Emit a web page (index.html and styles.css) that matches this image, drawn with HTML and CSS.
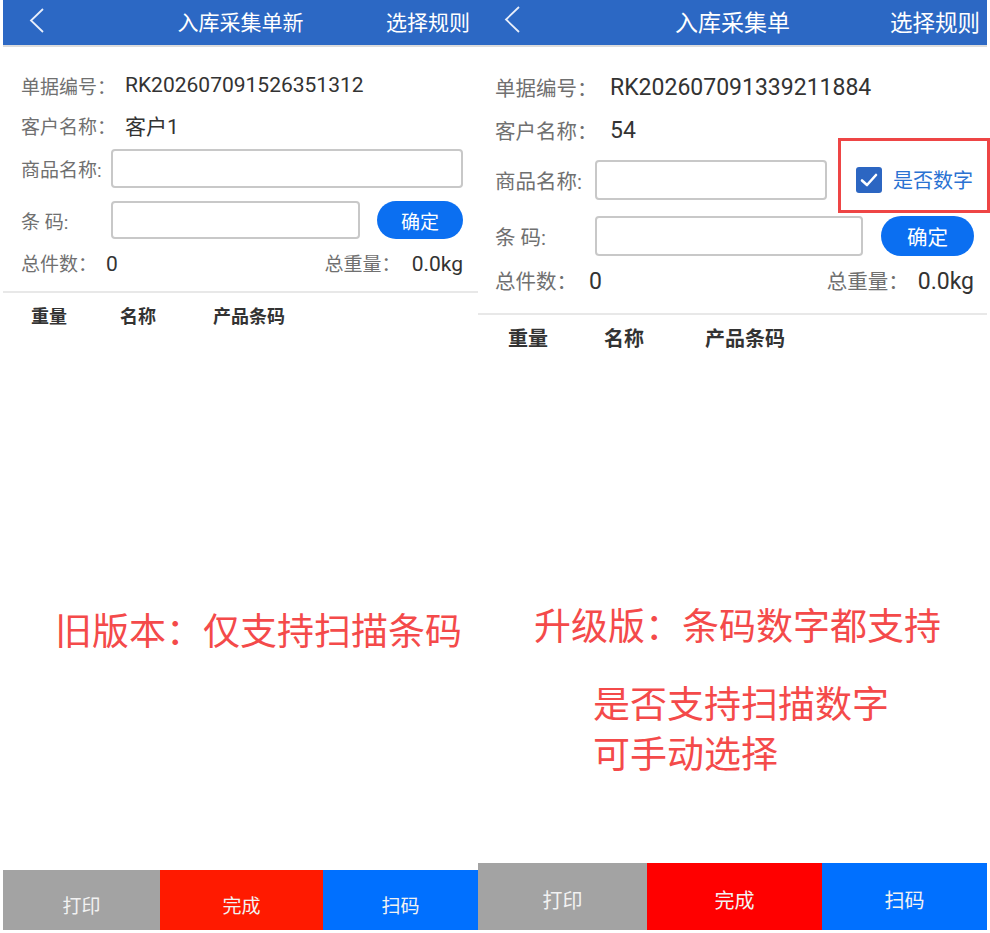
FILE: index.html
```html
<!DOCTYPE html>
<html lang="zh-CN">
<head>
  <meta charset="UTF-8" />
  <title>入库采集单</title>
  <link rel="stylesheet" href="styles.css">
</head>
<body>
  <div class="screens">

    <!-- old version -->
    <section class="phone phone-old">
      <header class="topbar">
        <span class="back">
          <svg width="16" height="26" viewBox="0 0 16 26"><polyline points="14,1 2,12.5 14,24" /></svg>
        </span>
        <h1 class="title">入库采集单新</h1>
        <span class="rule">选择规则</span>
      </header>

      <div class="form">
        <div class="row row-info"><span class="label">单据编号：</span><span class="value">RK202607091526351312</span></div>
        <div class="row row-info"><span class="label">客户名称：</span><span class="value">客户1</span></div>
        <div class="row field-name"><span class="label">商品名称:</span><input class="input" type="text"></div>
        <div class="row field-code"><span class="label">条 码:</span><input class="input" type="text"><button class="confirm">确定</button></div>
        <div class="row totals">
          <div><span class="label count-label">总件数：</span><span class="value">0</span></div>
          <div><span class="label">总重量：</span><span class="value weight">0.0kg</span></div>
        </div>
      </div>

      <div class="divider"></div>
      <div class="cols"><span>重量</span><span>名称</span><span>产品条码</span></div>

      <div class="list">
        <p class="note">旧版本：仅支持扫描条码</p>
      </div>

      <nav class="actions">
        <span class="act act-print">打印</span>
        <span class="act act-done">完成</span>
        <span class="act act-scan">扫码</span>
      </nav>
    </section>

    <!-- upgraded version -->
    <section class="phone phone-new">
      <header class="topbar">
        <span class="back">
          <svg width="17" height="28" viewBox="0 0 17 28"><polyline points="15,1 2,13.5 15,26" /></svg>
        </span>
        <h1 class="title">入库采集单</h1>
        <span class="rule">选择规则</span>
      </header>

      <div class="form">
        <div class="row row-info"><span class="label">单据编号：</span><span class="value">RK202607091339211884</span></div>
        <div class="row row-info"><span class="label">客户名称：</span><span class="value">54</span></div>
        <div class="row field-name">
          <span class="label">商品名称:</span><input class="input" type="text">
          <label class="digits">
            <span class="check">
              <svg width="26" height="26" viewBox="0 0 26 26"><polyline points="6,13.5 11,18 20,8" /></svg>
            </span>
            <span class="check-text">是否数字</span>
          </label>
        </div>
        <div class="row field-code"><span class="label">条 码:</span><input class="input" type="text"><button class="confirm">确定</button></div>
        <div class="row totals">
          <div><span class="label count-label">总件数：</span><span class="value">0</span></div>
          <div><span class="label">总重量：</span><span class="value weight">0.0kg</span></div>
        </div>
      </div>

      <div class="mark"></div>

      <div class="divider"></div>
      <div class="cols"><span>重量</span><span>名称</span><span>产品条码</span></div>

      <div class="list">
        <p class="note">升级版：条码数字都支持</p>
        <p class="note note-sub">是否支持扫描数字<br>可手动选择</p>
      </div>

      <nav class="actions">
        <span class="act act-print">打印</span>
        <span class="act act-done">完成</span>
        <span class="act act-scan">扫码</span>
      </nav>
    </section>

  </div>
</body>
</html>
```

FILE: styles.css
```css
body {
  margin: 0;
  font-family: Roboto, "Noto Sans CJK SC", sans-serif;
  background-color: #fff;
  color: #333;
}
.screens {
  display: flex;
  align-items: flex-start;
  padding-left: 3px;
}
.phone {
  position: relative;
  display: flex;
  flex-direction: column;
  height: 930px;
}
.phone-old {
  width: 475px;
}
.phone-new {
  width: 509px;
}

/* top bar */
.topbar {
  height: 45px;
  flex: none;
  display: grid;
  grid-template-columns: 1fr auto 1fr;
  align-items: center;
  background-color: #2c68c4;
  color: #fff;
  box-shadow: 0 2px 0 #dcdcdc;
}
.back {
  display: flex;
  padding-left: 26px;
  padding-bottom: 4px;
}
.back polyline {
  fill: none;
  stroke: #e8eefa;
  stroke-width: 1.8;
}
.title {
  margin: 0 0 3px;
  font-size: 21px;
  font-weight: 400;
}
.rule {
  justify-self: end;
  padding-right: 8px;
  padding-bottom: 3px;
  font-size: 21px;
}
.phone-new .back {
  padding-left: 26px;
  padding-bottom: 6px;
}
.phone-new .title {
  font-size: 23px;
}
.phone-new .rule {
  padding-right: 7px;
  font-size: 22.5px;
}

/* form */
.form {
  padding: 20px 15px 0 18px;
}
.row {
  display: flex;
  align-items: center;
}
.label {
  flex: none;
  font-size: 19px;
  color: #707070;
}
.value {
  font-size: 21px;
  color: #333;
}
.row-info {
  height: 40px;
}
.row-info .label {
  width: 104px;
}
.field-name .label,
.field-code .label {
  width: 90px;
}
.field-name {
  margin-top: 3px;
  height: 41px;
}
.field-code {
  margin-top: 11px;
  height: 40px;
}
.input {
  flex: 1;
  min-width: 0;
  height: 39px;
  box-sizing: border-box;
  border: 2px solid #c8c8c8;
  border-radius: 4px;
  background-color: #fff;
}
.field-code .input {
  height: 38px;
}
.confirm {
  flex: none;
  width: 86px;
  height: 38px;
  margin-left: 17px;
  border: none;
  border-radius: 19px;
  background-color: #0b6ff1;
  color: #fff;
  font-family: inherit;
  font-size: 19px;
}
.totals {
  margin-top: 7px;
  height: 30px;
  justify-content: space-between;
}
.count-label {
  display: inline-block;
  width: 85px;
}
.weight {
  margin-left: 11px;
}

.divider {
  margin-top: 14px;
  height: 2px;
  background-color: #e8e8e8;
}
.cols {
  display: flex;
  align-items: center;
  height: 44px;
  padding-left: 28px;
  font-size: 18px;
  font-weight: 700;
  color: #333;
}
.cols span:nth-child(1) {
  width: 89px;
}
.cols span:nth-child(2) {
  width: 93px;
}

/* empty list with annotations */
.list {
  flex: 1;
}
.note {
  margin: 271px 0 0;
  padding-left: 52px;
  font-size: 37px;
  line-height: 50px;
  color: #f44a4a;
}

/* bottom actions */
.actions {
  flex: none;
  display: flex;
  height: 60px;
  color: #f2f2f2;
  font-size: 19px;
}
.act {
  display: flex;
  align-items: center;
  justify-content: center;
  padding-top: 8px;
  box-sizing: border-box;
}
.act-print {
  width: 157px;
  background-color: #a3a3a3;
}
.act-done {
  width: 163px;
  background-color: #ff1a00;
}
.act-scan {
  flex: 1;
  background-color: #0070ff;
}

/* upgraded screen sizes */
.phone-new .form {
  padding: 22px 13px 0 17px;
}
.phone-new .label {
  font-size: 20.5px;
}
.phone-new .value {
  font-size: 23px;
}
.phone-new .row-info .label {
  width: 115px;
}
.phone-new .field-name .label,
.phone-new .field-code .label {
  width: 100px;
}
.phone-new .row-info + .row-info {
  margin-top: 3px;
}
.phone-new .field-name {
  margin-top: 9px;
}
.phone-new .field-name .input {
  flex: none;
  width: 232px;
  height: 40px;
}
.phone-new .field-code {
  margin-top: 15px;
  height: 41px;
}
.phone-new .field-code .input {
  height: 40px;
}
.phone-new .confirm {
  width: 93px;
  height: 40px;
  margin-left: 18px;
  border-radius: 20px;
  font-size: 20.5px;
}
.phone-new .totals {
  margin-top: 8px;
  height: 32px;
}
.phone-new .count-label {
  width: 94px;
}
.phone-new .weight {
  margin-left: 9px;
}
.phone-new .divider {
  margin-top: 17px;
}
.phone-new .cols {
  padding-left: 30px;
  font-size: 20px;
}
.phone-new .cols span:nth-child(1) {
  width: 96px;
}
.phone-new .cols span:nth-child(2) {
  width: 101px;
}
.phone-new .note {
  margin-top: 244px;
  padding-left: 56px;
}
.phone-new .note-sub {
  margin-top: 28px;
  padding-left: 115px;
}
.phone-new .actions {
  height: 67px;
  font-size: 20px;
}
.phone-new .act {
  padding-top: 6px;
}
.phone-new .act-print {
  width: 169px;
}
.phone-new .act-done {
  width: 175px;
  background-color: #ff0000;
}

/* digits toggle */
.digits {
  display: flex;
  align-items: center;
  margin-left: 29px;
}
.check {
  display: flex;
  width: 26px;
  height: 26px;
  border-radius: 3px;
  background-color: #2c66c2;
}
.check polyline {
  fill: none;
  stroke: #fff;
  stroke-width: 2.6;
  stroke-linecap: round;
  stroke-linejoin: round;
}
.check-text {
  margin-left: 11px;
  font-size: 20px;
  color: #2a72d2;
}
.mark {
  position: absolute;
  left: 360px;
  top: 138px;
  width: 152px;
  height: 75px;
  box-sizing: border-box;
  border: 3px solid #ee4545;
}
```
